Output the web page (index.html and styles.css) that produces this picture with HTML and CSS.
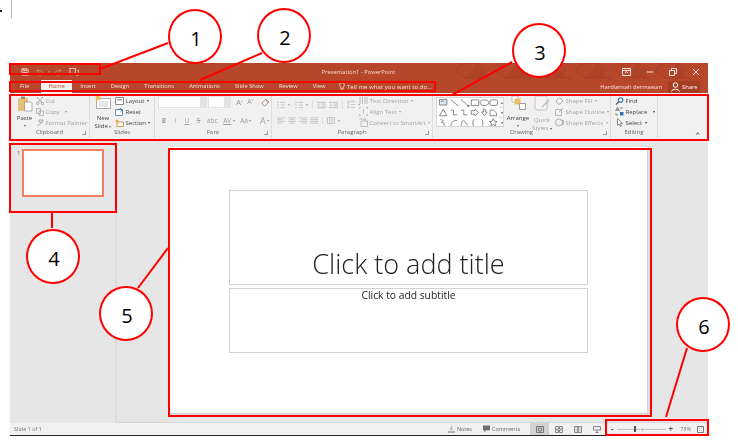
FILE: index.html
```html
<!DOCTYPE html>
<html lang="en">
<head>
    <title>PowerPoint window parts</title>
    <meta charset="UTF-8">
    <link rel="stylesheet" href="styles.css">
</head>
<body>
    <div class="window">
        <!-- title bar -->
        <div class="titlebar">
            <svg class="pattern" width="245" height="30">
                <defs>
                    <pattern id="hex" width="40" height="30" patternUnits="userSpaceOnUse">
                        <path d="M0 7l10-7h12l9 7-9 8H10zM20 15h14l6 8-6 7H20l-6-7z" fill="none" stroke="#a63c22" stroke-width="1"/>
                        <path d="M22 0l10 14H12z" fill="#a63c22" opacity=".45"/>
                        <circle cx="6" cy="23" r="5" fill="#a63c22" opacity=".55"/>
                    </pattern>
                </defs>
                <rect width="245" height="30" fill="url(#hex)"/>
            </svg>
            <div class="qat">
                <svg class="ico" width="8" height="8" viewBox="0 0 9 9"><path d="M1 1h6l1 1v6H1zM3 1v2h3V1M2.500 8V5h4v3" fill="none" stroke="#f6e3dc"/></svg>
                <svg class="ico" width="8" height="8" viewBox="0 0 9 9"><path d="M3 1L1 3l2 2M1 3h4a2.500 2.500 0 0 1 0 5H3" fill="none" stroke="#cf8a74"/></svg>
                <span class="qat-caret">▾</span>
                <svg class="ico" width="8" height="8" viewBox="0 0 9 9"><path d="M6 1l2 2-2 2M8 3H4a2.500 2.500 0 0 0 0 5h2" fill="none" stroke="#cf8a74"/></svg>
                <svg class="ico" width="10" height="8" viewBox="0 0 11 9"><path d="M0 .5h8M1 1v5h6V1M4 6v2M9 3h2v5H8" fill="none" stroke="#f0d5cb"/></svg>
                <span class="qat-more">₌</span>
            </div>
            <div class="doc-title">Presentation1 - PowerPoint</div>
            <div class="winbtns">
                <svg width="9" height="8" viewBox="0 0 9 8"><path d="M.500.500h8v7h-8zM.500 2.500h8M3 5l1.500-1.500L6 5" fill="none" stroke="#f6e3dc"/></svg>
                <svg width="8" height="8" viewBox="0 0 8 8"><path d="M1 4h6" stroke="#f6e3dc"/></svg>
                <svg width="8" height="8" viewBox="0 0 8 8"><path d="M.500 2.500h5v5h-5zM2.500 2V.500h5v5H6" fill="none" stroke="#f6e3dc"/></svg>
                <svg width="8" height="8" viewBox="0 0 8 8"><path d="M1 1l6 6M7 1L1 7" stroke="#f6e3dc"/></svg>
            </div>
        </div>

        <!-- tabs -->
        <div class="tabbar">
            <span class="tab tab-file">File</span>
            <span class="tab tab-home">Home</span>
            <span class="tab">Insert</span>
            <span class="tab">Design</span>
            <span class="tab">Transitions</span>
            <span class="tab">Animations</span>
            <span class="tab">Slide Show</span>
            <span class="tab">Review</span>
            <span class="tab">View</span>
            <span class="tell">
                <svg width="6" height="9" viewBox="0 0 6 9"><path d="M3 .500a2.500 2.500 0 0 1 1.200 4.600V7H1.800V5.100A2.500 2.500 0 0 1 3 .500zM2 8.300h2" fill="none" stroke="#f6e3dc" stroke-width=".8"/></svg>
                Tell me what you want to do...
            </span>
            <span class="user">Hardiansah dermawan</span>
            <span class="share">
                <svg width="9" height="10" viewBox="0 0 9 10"><circle cx="4.500" cy="3" r="2.300" fill="none" stroke="#fff"/><path d="M.500 9.500c.5-3 7.500-3 8 0" fill="none" stroke="#fff"/></svg>
                Share
            </span>
        </div>

        <!-- ribbon -->
        <div class="ribbon">
            <div class="group g-clip">
                <div class="group-body">
                    <div class="bigbtn paste">
                        <svg width="16" height="17" viewBox="0 0 16 17"><path d="M1 3h10v13H1z" fill="#e9c078"/><path d="M4 1.500h4V4H4z" fill="#8a8a8a"/><path d="M7.500 7h6l1.500 1.500V16H7.500z" fill="#fff" stroke="#8a8a8a" stroke-width=".7"/></svg>
                        <span class="dark">Paste</span>
                        <span class="caret">▾</span>
                    </div>
                    <div class="rows">
                        <div class="row off"><svg width="8" height="8" viewBox="0 0 8 8"><path d="M1 0l5 6M7 0L2 6" fill="none" stroke="#aaa"/><circle cx="1.500" cy="6.500" r="1.200" fill="none" stroke="#aaa"/><circle cx="6.500" cy="6.500" r="1.200" fill="none" stroke="#aaa"/></svg>Cut</div>
                        <div class="row off"><svg width="8" height="8" viewBox="0 0 8 8"><path d="M.500.500h4v5h-4zM3 3h4.500v4.500H3z" fill="#f1f1f1" stroke="#aaa" stroke-width=".8"/></svg>Copy <span class="drop drop-wide">▾</span></div>
                        <div class="row off"><svg width="8" height="8" viewBox="0 0 8 8"><path d="M3 1h4v2H3zM5 3v1.500L3 5.500 1 7.500" fill="none" stroke="#aaa"/></svg>Format Painter</div>
                    </div>
                </div>
                <div class="group-label">Clipboard<i class="launcher"></i></div>
            </div>

            <div class="group g-slides">
                <div class="group-body">
                    <div class="bigbtn newslide">
                        <svg width="16" height="14" viewBox="0 0 16 14"><path d="M1.500 3.500h14v10h-14z" fill="#fff" stroke="#8a8a8a" stroke-width=".7"/><path d="M4 7h9M4 9h9M4 11h9" stroke="#b5b5b5" stroke-width=".7"/><circle cx="3" cy="3" r="2.500" fill="#efc15c"/></svg>
                        <span class="dark">New</span>
                        <span class="dark">Slide <span class="caret">▾</span></span>
                    </div>
                    <div class="rows">
                        <div class="row on"><svg width="9" height="8" viewBox="0 0 9 8"><path d="M.500.500h8v7h-8z" fill="#fff" stroke="#888"/><path d="M2 2h5v1.500H2z" fill="#9aa7b5"/></svg>Layout <span class="drop">▾</span></div>
                        <div class="row on"><svg width="9" height="8" viewBox="0 0 9 8"><path d="M.500 1.500h7v6h-7z" fill="#fff" stroke="#6f8fae"/><path d="M3 2.500L5 .5l2 1-1 2" fill="none" stroke="#3b78b4"/></svg>Reset</div>
                        <div class="row on"><svg width="9" height="8" viewBox="0 0 9 8"><path d="M2 3h6.500v4.500H2z" fill="#fff" stroke="#d49a55"/><circle cx="2" cy="2" r="1.600" fill="#e8b04e"/></svg>Section <span class="drop">▾</span></div>
                    </div>
                </div>
                <div class="group-label">Slides</div>
            </div>

            <div class="group g-font">
                <div class="group-body font-body">
                    <div class="font-top">
                        <div class="combo combo-name"><i></i></div>
                        <div class="combo combo-size"><i></i></div>
                        <span class="fbtn grow">A<sup>▴</sup></span>
                        <span class="fbtn shrink">A<sup>▾</sup></span>
                        <svg class="eraser" width="9" height="9" viewBox="0 0 9 9"><path d="M1 5l4-4 3 3-4 4H3z" fill="none" stroke="#b3a08c"/><path d="M5 2l2 3" stroke="#c98ea8"/></svg>
                    </div>
                    <div class="font-bottom">
                        <b>B</b><em>I</em><u>U</u><s>S</s><span>abc</span><span class="av">AV</span><span class="c">▾</span><span class="aa">Aa</span><span class="c">▾</span><span class="bigA">A</span><span class="c">▾</span>
                    </div>
                </div>
                <div class="group-label">Font<i class="launcher"></i></div>
            </div>

            <div class="group g-para">
                <div class="group-body para-body">
                    <div class="para-left">
                        <div class="para-line">
                            <svg width="8" height="8" viewBox="0 0 9 8"><path d="M0 1h2M4 1h5M0 4h2M4 4h5M0 7h2M4 7h5" stroke="#bbb" stroke-width=".9"/></svg><span class="c">▾</span>
                            <svg class="gap" width="8" height="8" viewBox="0 0 9 8"><path d="M0 1h2M4 1h5M0 4h2M4 4h5M0 7h2M4 7h5" stroke="#bbb" stroke-width=".9"/></svg><span class="c">▾</span>
                            <svg class="sep" width="9" height="8" viewBox="0 0 10 8"><path d="M0 1h10M5 3h5M5 5h5M0 7h10M3 2.500L1 4l2 1.500" fill="none" stroke="#bbb" stroke-width=".9"/></svg>
                            <svg class="near" width="9" height="8" viewBox="0 0 10 8"><path d="M0 1h10M5 3h5M5 5h5M0 7h10M1 2.500L3 4 1 5.500" fill="none" stroke="#bbb" stroke-width=".9"/></svg>
                            <svg class="sep" width="8" height="9" viewBox="0 0 9 9"><path d="M4 1h5M4 4.500h5M4 8h5M1.500 1v7M0 2l1.500-1.500L3 2M0 7l1.500 1.500L3 7" fill="none" stroke="#bbb" stroke-width=".9"/></svg><span class="c">▾</span>
                        </div>
                        <div class="para-line para-line-2">
                            <svg width="8" height="7" viewBox="0 0 9 8"><path d="M0 1h9M0 3h6M0 5h9M0 7h6" stroke="#bbb" stroke-width=".9"/></svg>
                            <svg class="near" width="8" height="7" viewBox="0 0 9 8"><path d="M0 1h9M1.500 3h6M0 5h9M1.500 7h6" stroke="#bbb" stroke-width=".9"/></svg>
                            <svg class="near" width="8" height="7" viewBox="0 0 9 8"><path d="M0 1h9M3 3h6M0 5h9M3 7h6" stroke="#bbb" stroke-width=".9"/></svg>
                            <svg class="near" width="8" height="7" viewBox="0 0 9 8"><path d="M0 1h9M0 3h9M0 5h9M0 7h9" stroke="#bbb" stroke-width=".9"/></svg>
                            <svg class="sep" width="8" height="7" viewBox="0 0 9 8"><path d="M.500.500h8v7h-8zM3.300.500v7M5.700.500v7" fill="none" stroke="#bbb" stroke-width=".9"/></svg><span class="c">▾</span>
                        </div>
                    </div>
                    <div class="rows para-rows">
                        <div class="row off"><svg width="9" height="9" viewBox="0 0 9 9"><path d="M1 1v7M3.500 1v7M6 1v7M8 1v7" stroke="#b8b8b8" stroke-width=".9"/></svg>Text Direction <span class="drop">▾</span></div>
                        <div class="row off"><svg width="9" height="9" viewBox="0 0 9 9"><path d="M.500 2V.500H2M7 .500h1.500V2M.500 7v1.500H2M7 8.500h1.500V7M4.500 2v5" fill="none" stroke="#b0b0b0" stroke-width=".8"/></svg>Align Text <span class="drop">▾</span></div>
                        <div class="row off"><svg width="9" height="9" viewBox="0 0 9 9"><path d="M.500 1h6v2M2 3h6.500v5.500H2z" fill="#f1f1f1" stroke="#b0b0b0" stroke-width=".8"/></svg>Convert to SmartArt <span class="drop">▾</span></div>
                    </div>
                </div>
                <div class="group-label">Paragraph<i class="launcher"></i></div>
            </div>

            <div class="group g-draw">
                <div class="group-body">
                    <div class="gallery">
                        <svg width="62" height="29" viewBox="0 0 65 31" fill="none" stroke="#666" stroke-width=".8">
                            <path d="M2 1.500h8v6H2z" fill="#dbe7f3"/><path d="M3.500 3.500h3" stroke="#3b6ea8"/>
                            <path d="M14 1.500l8 7M25 1.500l8 7"/><circle cx="33" cy="8.500" r=".8" fill="#666"/>
                            <path d="M36 2h8v6h-8z"/><ellipse cx="50" cy="5" rx="4.500" ry="3"/><rect x="56" y="2" width="8" height="6" rx="1.500"/>
                            <path d="M6 12l4 7H2zM14 13h3v5h4M25 13h3v5h4M36 13.500h4V12l4 3.500-4 3.500v-1.500h-4zM49 12h2v3h2l-3 4-3-4h2zM56 13h4l3 3v3h-7z"/>
                            <path d="M3 23l3 1-2 2 3 1v3M14 30c1-5 3-6 7-6M25 30c1-5 2-6 3-6s3 5 5 6"/>
                            <path d="M39 23c-1 0-1 1-1 3s-1 1-1 1 1 0 1 1 0 2 1 2M47 23c1 0 1 1 1 3s1 1 1 1-1 0-1 1 0 2-1 2"/>
                            <path d="M59.500 22l1.200 2.800 3 .3-2.300 2 .7 3-2.600-1.600-2.600 1.600.7-3-2.300-2 3-.3z"/>
                        </svg>
                        <div class="gallery-scroll"><i>▴</i><i>▾</i><i>▾</i></div>
                    </div>
                    <div class="bigbtn arrange">
                        <svg width="15" height="15" viewBox="0 0 15 15"><path d="M1 1h6v6H1z" fill="#fff" stroke="#aaa" stroke-width=".7"/><path d="M3.500 3.500h6v6h-6z" fill="#efbf6a"/><path d="M8.500 8.500h6v6h-6z" fill="#fff" stroke="#777" stroke-width=".7"/></svg>
                        <span class="dark">Arrange</span>
                        <span class="caret">▾</span>
                    </div>
                    <div class="bigbtn quick off">
                        <svg width="16" height="16" viewBox="0 0 16 16"><rect x="1" y="1" width="12" height="14" rx="2" fill="#f6f2f6" stroke="#c4c4c4"/><path d="M8 12l7-7" stroke="#bdbdbd" stroke-width="1.500"/></svg>
                        <span>Quick</span>
                        <span>Styles <span class="caret">▾</span></span>
                    </div>
                    <div class="rows">
                        <div class="row off"><svg width="9" height="9" viewBox="0 0 9 9"><path d="M1 5l3.500-3.500L8 5 5 8H3z" fill="none" stroke="#b0b0b0"/></svg>Shape Fill <span class="drop">▾</span></div>
                        <div class="row off"><svg width="9" height="9" viewBox="0 0 9 9"><path d="M.500 2.500h6v6h-6zM4 5l4-4" fill="none" stroke="#b0b0b0" stroke-width=".9"/></svg>Shape Outline <span class="drop">▾</span></div>
                        <div class="row off"><svg width="9" height="9" viewBox="0 0 9 9"><circle cx="4" cy="4.500" r="3.500" fill="#f1f1f1" stroke="#b0b0b0"/><path d="M6 2.500h2.500v4H6" fill="none" stroke="#b0b0b0"/></svg>Shape Effects <span class="drop">▾</span></div>
                    </div>
                </div>
                <div class="group-label">Drawing<i class="launcher"></i></div>
            </div>

            <div class="group g-edit">
                <div class="group-body">
                    <div class="rows">
                        <div class="row on"><svg width="9" height="8" viewBox="0 0 8 8"><circle cx="5" cy="3" r="2.300" fill="none" stroke="#2e75b6" stroke-width="1.100"/><path d="M3.300 4.700L.500 7.500" stroke="#555" stroke-width="1.200"/></svg>Find</div>
                        <div class="row on"><svg width="9" height="9" viewBox="0 0 9 9"><path d="M.500 4l2-3.500L4.500 4M1.200 3h2.600" fill="none" stroke="#555" stroke-width=".8"/><path d="M5 5h3.500v3.500H5z" fill="#2e75b6"/><path d="M5 1h3M1 6v2h2" fill="none" stroke="#777" stroke-width=".8"/></svg>Replace <span class="drop drop-wide">▾</span></div>
                        <div class="row on"><svg width="9" height="9" viewBox="0 0 8 9"><path d="M2 .500v7l1.700-1.500L5 8.500l1-.5L4.800 5.500H7z" fill="#fff" stroke="#666" stroke-width=".7"/></svg>Select <span class="drop">▾</span></div>
                    </div>
                </div>
                <div class="group-label">Editing</div>
            </div>

            <div class="ribbon-end"><span class="collapse">⌃</span></div>
        </div>

        <!-- thumbnails and slide -->
        <div class="main">
            <div class="thumbs">
                <span class="thumb-num">1</span>
                <div class="thumb"></div>
            </div>
            <div class="editor">
                <div class="slide">
                    <div class="ph ph-title">Click to add title</div>
                    <div class="ph ph-sub">Click to add subtitle</div>
                </div>
            </div>
        </div>

        <!-- status bar -->
        <div class="statusbar">
            <span class="st-left">Slide 1 of 1</span>
            <span class="st-item st-notes"><svg width="7" height="8" viewBox="0 0 7 8"><path d="M3.500 0L5 5H2zM0 6h7v2H0z" fill="#b5b5b5"/></svg>Notes</span>
            <span class="st-item"><svg width="7" height="8" viewBox="0 0 8 8"><path d="M0 0h8v5.500H3.500L1.500 8V5.500H0z" fill="#6d6d6d"/></svg>Comments</span>
            <span class="view view-on"><svg width="8" height="7" viewBox="0 0 8 7"><path d="M.500.500h7v6h-7zM2.500 2h3v3h-3z" fill="none" stroke="#777"/></svg></span>
            <span class="view"><svg width="8" height="7" viewBox="0 0 8 7"><path d="M.500.500h3v2.500h-3zM4.500.500h3v2.500h-3zM.500 4h3v2.500h-3zM4.500 4h3v2.500h-3z" fill="none" stroke="#888"/></svg></span>
            <span class="view"><svg width="8" height="7" viewBox="0 0 8 7"><path d="M.500.500h3.500v6H.500zM4 .500h3.500v6H4z" fill="#ddd" stroke="#888"/></svg></span>
            <span class="view"><svg width="8" height="7" viewBox="0 0 8 7"><path d="M.500.500h7v3.500h-7zM4 4v3M2.500 6.500h3" fill="none" stroke="#888"/></svg></span>
            <div class="zoombar">
                <span class="z-sign">-</span>
                <div class="z-track"><i class="z-thumb"></i><i class="z-mid"></i></div>
                <span class="z-sign">+</span>
                <span class="z-pct">73%</span>
                <svg width="7" height="7" viewBox="0 0 7 7"><path d="M.500.500h6v6h-6zM2 2h.5M4.500 2H5M2 4.500h.5M4.500 4.500H5" fill="none" stroke="#777"/></svg>
            </div>
        </div>
    </div>

    <!-- screenshot specks at top left -->
    <i class="speck"></i>
    <i class="rule"></i>

    <!-- annotations over the window -->
    <svg class="leaders" width="738" height="442">
        <path d="M100 69L168 43M200 80L262 53M452 95L512 62M52 212V228M168 248L138 288M666 417L687 348" fill="none" stroke="#f00" stroke-width="2"/>
    </svg>
    <div class="mark m1"></div>
    <div class="mark m2"></div>
    <div class="mark m3"></div>
    <div class="mark m4"></div>
    <div class="mark m5"></div>
    <div class="mark m6"></div>
    <div class="callout c1">1</div>
    <div class="callout c2">2</div>
    <div class="callout c3">3</div>
    <div class="callout c4">4</div>
    <div class="callout c5">5</div>
    <div class="callout c6">6</div>
</body>
</html>
```

FILE: styles.css
```css
html, body {
    margin: 0;
    padding: 0;
    background: #fff;
}
body {
    position: relative;
    width: 738px;
    height: 442px;
    overflow: hidden;
    font-family: "Open Sans", "Liberation Sans", sans-serif;
    font-size: 6px;
    color: #444;
}
svg {
    display: block;
    flex: none;
}

/* window */
.window {
    position: absolute;
    left: 10px;
    top: 63px;
    width: 698px;
    height: 373px;
    display: flex;
    flex-direction: column;
    background: #e6e6e6;
    border-bottom: 1px solid #222;
    box-sizing: border-box;
    filter: blur(.35px);
}

/* title bar */
.titlebar {
    position: relative;
    height: 17px;
    flex: none;
    display: flex;
    align-items: center;
    background: #b7472a;
    color: #f6e3dc;
}
.pattern {
    position: absolute;
    left: 445px;
    top: 0;
}
.qat {
    position: relative;
    display: flex;
    align-items: center;
    padding-left: 11px;
    width: 290px;
    box-sizing: border-box;
}
.qat .ico {
    margin-right: 7px;
}
.qat-caret {
    margin: 0 4px 0 -3px;
    font-size: 4px;
    color: #cf8a74;
}
.qat-more {
    font-size: 6px;
    margin-left: 1px;
}
.doc-title {
    position: relative;
    width: 120px;
    margin-left: -1.5px;
    text-align: center;
    font-size: 5.8px;
    color: #f3d9d0;
}
.winbtns {
    position: relative;
    display: flex;
    align-items: center;
    gap: 15px;
    margin-left: auto;
    padding-right: 8px;
}

/* tabs */
.tabbar {
    height: 13px;
    flex: none;
    display: flex;
    align-items: center;
    background: #b7472a;
    color: #f6e3dc;
    font-size: 5.8px;
    position: relative;
}
.tab {
    padding: 0 7.5px;
    line-height: 13px;
}
.tab-file {
    padding: 0 12px 0 10px;
}
.tab-home {
    background: #f1f1f1;
    color: #b7472a;
    padding: 0 6px;
    width: 31px;
    box-sizing: border-box;
    text-align: center;
    margin-right: .5px;
}
.tell {
    display: flex;
    align-items: center;
    gap: 2px;
    margin-left: 6px;
    font-size: 6.1px;
}
.user {
    margin-left: auto;
    margin-right: 6px;
}
.share {
    display: flex;
    align-items: center;
    gap: 2px;
    width: 32px;
    height: 12px;
    padding-left: 3px;
    margin-right: 8px;
    box-sizing: border-box;
    background: #a63c22;
    color: #fff;
}

/* ribbon */
.ribbon {
    height: 47px;
    flex: none;
    display: flex;
    background: #f1f1f1;
    border-bottom: 1px solid #d2d2d2;
    box-sizing: border-box;
}
.group {
    display: flex;
    flex-direction: column;
    border-right: 1px solid #dcdcdc;
    box-sizing: border-box;
    margin-bottom: 1px;
    position: relative;
}
.g-clip { width: 80px; }
.g-slides { width: 65px; }
.g-font { width: 117px; }
.g-para { width: 161px; }
.g-draw { width: 178px; }
.g-edit { width: 47px; }
.group-body {
    flex: 1 1 0;
    min-height: 0;
    display: flex;
    padding-top: 2px;
}
.group-label {
    height: 10px;
    flex: none;
    line-height: 9px;
    text-align: center;
    color: #666;
}
.launcher {
    position: absolute;
    right: 3px;
    bottom: 3px;
    width: 3px;
    height: 3px;
    border: solid #999;
    border-width: 0 1px 1px 0;
}
.ribbon-end {
    flex: 1;
    position: relative;
}
.collapse {
    position: absolute;
    right: 6px;
    bottom: -3px;
    font-size: 9px;
    color: #555;
}
.bigbtn {
    display: flex;
    flex-direction: column;
    align-items: center;
    line-height: 8px;
    color: #a0a0a0;
}
.bigbtn .dark {
    color: #444;
}
.caret {
    font-size: 4px;
    color: #666;
    line-height: 8px;
}
.paste {
    width: 23px;
    margin-left: 3px;
}
.paste svg {
    margin-bottom: 2px;
}
.newslide {
    width: 24px;
    margin-left: 1px;
}
.newslide svg {
    margin-bottom: 5px;
}
.rows {
    display: flex;
    flex-direction: column;
}
.row {
    height: 11.7px;
    display: flex;
    align-items: center;
    gap: 1.5px;
    white-space: nowrap;
}
.row.off, .off {
    color: #a4a4a4;
}
.row.on {
    color: #444;
}
.drop {
    font-size: 4px;
    margin-left: 1px;
}
.drop-wide {
    margin-left: 4px;
}

/* font group */
.font-body {
    flex-direction: column;
    padding: 3px 0 0 3px;
}
.font-top {
    display: flex;
    align-items: center;
    height: 12px;
}
.combo {
    height: 12px;
    background: #fff;
    border: 1px solid #e2e2e2;
    box-sizing: border-box;
    display: flex;
    justify-content: flex-end;
    margin-right: 1px;
}
.combo i {
    width: 6px;
    background: #e3e3e3;
}
.combo-name { width: 49px; }
.combo-size { width: 23px; }
.fbtn {
    width: 11px;
    font-size: 8px;
    text-align: center;
    color: #999;
    line-height: 10px;
}
.fbtn sup {
    font-size: 3px;
    vertical-align: 3px;
    line-height: 0;
}
.grow { margin-left: 2px; }
.shrink { font-size: 7px; }
.eraser {
    margin-left: 5px;
}
.font-bottom {
    display: flex;
    align-items: center;
    gap: 5.5px;
    height: 12px;
    margin-top: 6px;
    padding-left: 3px;
    color: #a0a0a0;
    font-size: 6.5px;
}
.font-bottom em, .font-bottom b, .font-bottom u, .font-bottom s {
    width: 6px;
    text-align: center;
}
.font-bottom .c {
    font-size: 4px;
    margin-left: -4px;
}
.font-bottom .av {
    text-decoration: underline;
}
.font-bottom .bigA {
    font-size: 9px;
    margin-left: 3px;
}

/* paragraph group */
.para-body {
    padding: 6px 0 0 5px;
}
.para-left {
    width: 82px;
    flex: none;
}
.para-line {
    display: flex;
    align-items: center;
    height: 11px;
}
.para-line-2 {
    margin-top: 5px;
}
.para-line .c {
    font-size: 4px;
    color: #aaa;
    margin-left: 3px;
}
.para-line .gap {
    margin-left: 5px;
}
.para-line .near {
    margin-left: 3px;
}
.para-line .sep {
    margin-left: 4px;
    padding-left: 4px;
    border-left: 1px solid #dcdcdc;
}
.para-rows {
    margin-top: -4px;
}

/* drawing group */
.gallery {
    display: flex;
    margin: 2px 0 0 3px;
    width: 68px;
    height: 30px;
    background: #fff;
    border: 1px solid #d6d6d6;
    box-sizing: border-box;
    overflow: hidden;
}
.gallery-scroll {
    width: 5px;
    flex: none;
    display: flex;
    flex-direction: column;
    font-size: 4px;
    text-align: center;
    color: #666;
}
.gallery-scroll i {
    flex: 1;
    font-style: normal;
    line-height: 9px;
    border-bottom: 1px solid #ddd;
    background: #f6f6f6;
}
.arrange {
    width: 26px;
    margin-left: 1px;
}
.arrange svg {
    margin-bottom: 4px;
}
.quick {
    width: 22px;
}
.quick svg {
    margin-bottom: 5px;
}
.g-draw .rows {
    margin-left: 2px;
}
.g-edit .rows {
    margin-left: 4px;
}

/* main area */
.main {
    flex: 1;
    display: flex;
    min-height: 0;
}
.thumbs {
    width: 107px;
    flex: none;
    box-sizing: border-box;
    border-right: 2px solid #dcdcdc;
    display: flex;
    align-items: flex-start;
    padding: 9px 0 0 7px;
    gap: 2px;
}
.thumb-num {
    color: #c8593c;
    font-size: 6px;
    line-height: 8px;
}
.thumb {
    width: 78px;
    height: 44px;
    background: #fff;
    border: 2px solid #f47e62;
}
.editor {
    flex: 1;
    padding: 7px 61px 9px 51px;
    display: flex;
    border-bottom: 1px solid #d6d6d6;
}
.slide {
    flex: 1;
    background: #fff;
    display: flex;
    flex-direction: column;
    padding: 43px 59px 0 61px;
    box-shadow: 1px 1px 2px #c8c8c8;
}
.ph {
    border: 1px solid #d2d2d2;
    box-sizing: border-box;
    text-align: center;
    color: #222;
}
.ph-title {
    height: 95px;
    font-size: 27px;
    font-weight: 300;
    display: flex;
    align-items: flex-end;
    justify-content: center;
    padding-bottom: 3px;
    line-height: 34px;
}
.ph-sub {
    height: 65px;
    margin-top: 3px;
    font-size: 10.3px;
    line-height: 12px;
}

/* status bar */
.statusbar {
    height: 12px;
    flex: none;
    display: flex;
    align-items: center;
    background: #f1f1f1;
    color: #777;
    font-size: 5.5px;
}
.st-left {
    margin-left: 4px;
    margin-right: auto;
}
.st-item {
    display: flex;
    align-items: center;
    gap: 2px;
    margin-right: 9px;
    color: #666;
}
.st-notes {
    margin-right: 11px;
}
.view {
    width: 19px;
    height: 12px;
    display: flex;
    align-items: center;
    justify-content: center;
}
.view-on {
    background: #d2d2d2;
    margin-left: 1px;
}
.zoombar {
    display: flex;
    align-items: center;
    width: 102px;
    padding: 0 4px 0 5px;
    box-sizing: border-box;
}
.z-sign {
    font-size: 8px;
    line-height: 8px;
    color: #555;
    font-weight: 700;
}
.z-track {
    position: relative;
    width: 50px;
    height: 1px;
    margin: 0 3px;
    background: #c4c4c4;
}
.z-thumb {
    position: absolute;
    left: 17px;
    top: -3px;
    width: 2px;
    height: 6px;
    background: #555;
}
.z-mid {
    position: absolute;
    left: 25px;
    top: -1px;
    width: 1px;
    height: 3px;
    background: #bbb;
}
.z-pct {
    margin-left: 7px;
    margin-right: 6px;
}

/* specks */
.speck {
    position: absolute;
    left: 0;
    top: 10px;
    width: 2px;
    height: 2px;
    background: #222;
}
.rule {
    position: absolute;
    left: 11px;
    top: 0;
    width: 1px;
    height: 18px;
    background: #bbb;
}

/* annotations */
.leaders {
    position: absolute;
    left: 0;
    top: 0;
}
.mark {
    position: absolute;
    box-sizing: border-box;
    border: 2px solid #f00;
}
.m1 { left: 9px; top: 63px; width: 92px; height: 12px; }
.m2 { left: 9px; top: 81px; width: 427px; height: 11px; }
.m3 { left: 9px; top: 94px; width: 700px; height: 47px; }
.m4 { left: 9px; top: 143px; width: 108px; height: 70px; }
.m5 { left: 168px; top: 148px; width: 484px; height: 269px; }
.m6 { left: 605px; top: 419px; width: 104px; height: 17px; }
.callout {
    position: absolute;
    width: 54px;
    height: 55px;
    box-sizing: border-box;
    border: 2px solid #f00;
    border-radius: 50%;
    background: #fff;
    color: #000;
    font-size: 20px;
    line-height: 53px;
    padding: 1px 0 0 2px;
    text-align: center;
}
.c1 { left: 168px; top: 9px; }
.c2 { left: 257px; top: 8px; }
.c3 { left: 512px; top: 23px; }
.c4 { left: 26px; top: 229px; }
.c5 { left: 99px; top: 286px; }
.c6 { left: 676px; top: 297px; }
```
